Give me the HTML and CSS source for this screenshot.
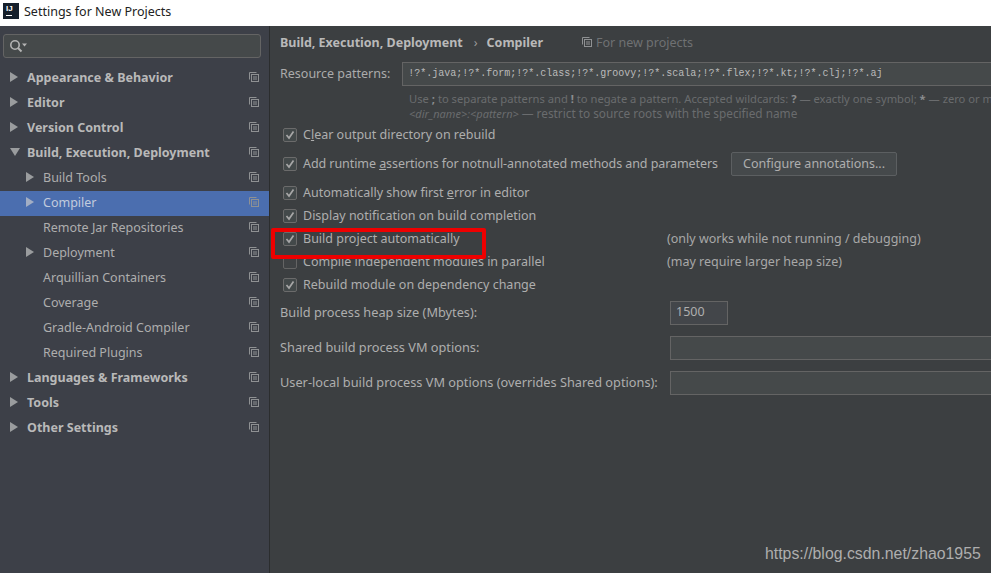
FILE: index.html
```html
<!DOCTYPE html>
<html lang="en">
<head>
<meta charset="utf-8">
<title>Settings for New Projects</title>
<link rel="stylesheet" href="styles.css">
</head>
<body>
<svg class="defs" width="0" height="0" aria-hidden="true">
  <symbol id="copy" viewBox="0 0 10 10">
    <path d="M.5 7.5V.5h7" fill="none" stroke="currentColor"/>
    <rect x="2.5" y="2.5" width="7" height="7" fill="none" stroke="currentColor"/>
    <path d="M4 5h4M4 7h4" stroke="currentColor"/>
  </symbol>
  <symbol id="check" viewBox="0 0 14 14">
    <rect x=".5" y=".5" width="13" height="13" rx="1.5" fill="#43494a" stroke="#6b6b6b"/>
    <path d="M3.5 7l2.5 3 4.5-6.5" fill="none" stroke="#a7a7a7" stroke-width="1.7"/>
  </symbol>
</svg>
<div class="window">
  <header class="titlebar">
    <span class="app-icon"><span class="app-icon-text">IJ</span><span class="app-icon-bar"></span></span>
    <span class="title">Settings for New Projects</span>
  </header>
  <div class="body">
    <nav class="sidebar">
      <div class="search">
        <svg class="search-icon" width="20" height="14" viewBox="0 0 20 14">
          <circle cx="6" cy="6" r="4.2" fill="none" stroke="#b4b4b4" stroke-width="1.6"/>
          <path d="M9 9l3.5 3.5" stroke="#b4b4b4" stroke-width="2"/>
          <path d="M13 4.5h5l-2.5 3z" fill="#b4b4b4"/>
        </svg>
      </div>
      <ul class="tree">
        <li class="row top"><span class="arrow right"></span><span class="label">Appearance &amp; Behavior</span><svg class="copy"><use href="#copy"/></svg></li>
        <li class="row top"><span class="arrow right"></span><span class="label">Editor</span><svg class="copy"><use href="#copy"/></svg></li>
        <li class="row top"><span class="arrow right"></span><span class="label">Version Control</span><svg class="copy"><use href="#copy"/></svg></li>
        <li class="row top"><span class="arrow down"></span><span class="label">Build, Execution, Deployment</span><svg class="copy"><use href="#copy"/></svg></li>
        <li class="row sub"><span class="arrow right"></span><span class="label">Build Tools</span><svg class="copy"><use href="#copy"/></svg></li>
        <li class="row sub selected"><span class="arrow right"></span><span class="label">Compiler</span><svg class="copy"><use href="#copy"/></svg></li>
        <li class="row sub"><span class="arrow none"></span><span class="label">Remote Jar Repositories</span><svg class="copy"><use href="#copy"/></svg></li>
        <li class="row sub"><span class="arrow right"></span><span class="label">Deployment</span><svg class="copy"><use href="#copy"/></svg></li>
        <li class="row sub"><span class="arrow none"></span><span class="label">Arquillian Containers</span><svg class="copy"><use href="#copy"/></svg></li>
        <li class="row sub"><span class="arrow none"></span><span class="label">Coverage</span><svg class="copy"><use href="#copy"/></svg></li>
        <li class="row sub"><span class="arrow none"></span><span class="label">Gradle-Android Compiler</span><svg class="copy"><use href="#copy"/></svg></li>
        <li class="row sub"><span class="arrow none"></span><span class="label">Required Plugins</span><svg class="copy"><use href="#copy"/></svg></li>
        <li class="row top"><span class="arrow right"></span><span class="label">Languages &amp; Frameworks</span><svg class="copy"><use href="#copy"/></svg></li>
        <li class="row top"><span class="arrow right"></span><span class="label">Tools</span><svg class="copy"><use href="#copy"/></svg></li>
        <li class="row top"><span class="arrow right"></span><span class="label">Other Settings</span><svg class="copy"><use href="#copy"/></svg></li>
      </ul>
    </nav>
    <main class="content">
      <div class="crumbs">
        <span class="crumb">Build, Execution, Deployment</span>
        <span class="sep">›</span>
        <span class="crumb">Compiler</span>
        <span class="scope"><svg class="copy"><use href="#copy"/></svg>For new projects</span>
      </div>
      <div class="patterns">
        <span class="field-label">Resource patterns:</span>
        <div class="input mono">!?*.java;!?*.form;!?*.class;!?*.groovy;!?*.scala;!?*.flex;!?*.kt;!?*.clj;!?*.aj</div>
      </div>
      <p class="hint">Use <b>;</b> to separate patterns and <b>!</b> to negate a pattern. Accepted wildcards: <b>?</b> — exactly one symbol; <b>*</b> — zero or more;<br><i>&lt;dir_name&gt;:&lt;pattern&gt;</i> <span class="hint-wide">— restrict to source roots with the specified name</span></p>
      <div class="check first"><svg class="box"><use href="#check"/></svg><span>C<u>l</u>ear output directory on rebuild</span></div>
      <div class="check second">
        <svg class="box"><use href="#check"/></svg><span class="tight">Add runtime <u>a</u>ssertions for notnull-annotated methods and parameters</span>
        <button class="btn">Configure annotations...</button>
      </div>
      <div class="check"><svg class="box"><use href="#check"/></svg><span>Automatically show first <u>e</u>rror in editor</span></div>
      <div class="check"><svg class="box"><use href="#check"/></svg><span>Display notification on build completion</span></div>
      <div class="check"><svg class="box"><use href="#check"/></svg><span class="check-text">Build project automatically</span><span class="note">(only works while not running / debugging)</span></div>
      <div class="check"><span class="box empty"></span><span class="check-text">Compile independent modules in parallel</span><span class="note">(may require larger heap size)</span></div>
      <div class="check"><svg class="box"><use href="#check"/></svg><span>Rebuild module on dependency change</span></div>
      <div class="form-row heap"><span class="form-label">Build process heap size (Mbytes):</span><div class="input short">1500</div></div>
      <div class="form-row"><span class="form-label">Shared build process VM options:</span><div class="input wide"></div></div>
      <div class="form-row"><span class="form-label">User-local build process VM options (overrides Shared options):</span><div class="input wide"></div></div>
      <div class="highlight"></div>
    </main>
  </div>
  <div class="watermark">https://blog.csdn.net/zhao1955</div>
</div>
</body>
</html>
```
FILE: styles.css
```css
* { box-sizing: border-box; }
html, body { margin: 0; height: 100%; overflow: hidden; }
body { font-family: "Noto Sans", "Open Sans", sans-serif; font-size: 12.5px; color: #b4b4b4; background: #3c3f41; }
.defs { position: absolute; }
.window { position: relative; width: 991px; height: 573px; display: flex; flex-direction: column; overflow: hidden; }

.titlebar { height: 26px; background: #fff; display: flex; align-items: center; padding-left: 3px; flex: none; }
.app-icon { width: 16px; height: 16px; background: #16202c; display: flex; flex-direction: column; padding: 1px 0 0 3px; margin-right: 5px; margin-top: -4px; }
.app-icon-text { font: bold 8px/9px "Liberation Sans", sans-serif; color: #fff; }
.app-icon-bar { width: 6px; height: 1px; background: #fff; margin-top: 2px; }
.title { color: #222; font-size: 12.5px; margin-top: -4px; }

.body { flex: 1; display: flex; min-height: 0; }
.sidebar { width: 270px; flex: none; background: #3d4048; border-right: 1px solid #2b2d2e; }
.search { height: 24px; margin: 8px 8px 8px 3px; background: #45494a; border: 1px solid #646464; border-radius: 3px; padding: 4px 0 0 5px; display: flex; }
.search-icon { display: block; }
.tree { list-style: none; margin: 0; padding: 0; }
.row { height: 25px; display: flex; align-items: center; padding: 0 10px 3px 0; }
.row .label { flex: 1; white-space: nowrap; }
.row.top { padding-left: 10px; }
.row.top .label { font-weight: 700; color: #b9b9b9; margin-left: 9px; }
.row.sub { padding-left: 26px; }
.row.sub .label { margin-left: 9px; color: #aeaeae; }
.row.selected { background: #4b6eaf; }
.row.selected .label { color: #c2cbdd; }
.arrow { width: 8px; height: 10px; flex: none; }
.arrow.right { border-style: solid; border-width: 5px 0 5px 8px; border-color: transparent transparent transparent #9a9c9e; }
.arrow.down { border-style: solid; border-width: 8px 5px 0 5px; border-color: #9a9c9e transparent transparent transparent; width: 10px; height: 8px; margin-right: -2px; }
.row.selected .arrow.right { border-left-color: #a3aec4; }
.copy { width: 10px; height: 10px; color: #8f9193; flex: none; }

.content { position: relative; flex: 1; min-width: 0; padding: 0 0 0 10px; background: #3c3f41; white-space: nowrap; overflow: hidden; }
.crumbs { height: 36px; display: flex; align-items: center; padding-bottom: 4px; }
.crumb { font-weight: 700; color: #b9b9b9; }
.sep { margin: 0 9px 0 11px; color: #9a9a9a; }
.scope { margin-left: 39px; color: #6f7173; display: flex; align-items: center; gap: 4px; }
.patterns { display: flex; align-items: center; gap: 12px; }
.field-label { color: #ababab; padding-bottom: 2px; }
.input { height: 24px; background: #45494a; border: 1px solid #646464; }
.mono { font: 10px/22px "Liberation Mono", monospace; color: #bbb; padding-left: 5px; width: 620px; flex: none; }
.hint { margin: 5px 0 0 129px; font-size: 11.2px; line-height: 15px; color: #6a6c6e; height: 30px; }
.hint b { color: #8b8d8f; }
.hint i { font-style: italic; font-size: 11px; }
.hint-wide { font-size: 11.8px; }
.check { height: 23px; display: flex; align-items: center; color: #aeaeae; padding-left: 3px; }
.check.first { margin-top: 2px; }
.check.second { height: 35px; }
.tight { letter-spacing: -0.07px; }
.box { width: 14px; height: 14px; margin-right: 6px; flex: none; }
.box.empty { border: 1px solid #646464; border-radius: 2px; background: #3f4244; }
.check-text { width: 364px; flex: none; }
.note { color: #a8a8a8; }
.btn { margin-left: 13px; height: 24px; width: 166px; padding: 0; font: inherit; color: #aeaeae; background: #45494b; border: 1px solid #5c5f61; border-radius: 2px; }
.form-row { height: 24px; margin-top: 11px; display: flex; align-items: center; color: #aeaeae; }
.form-row.heap { margin-top: 5px; }
.form-label { width: 390px; flex: none; padding-bottom: 2px; font-size: 12.75px; }
.input.short { width: 58px; padding-left: 5px; line-height: 20px; background: #43464a; }
.input.wide { width: 340px; flex: none; }

.highlight { position: absolute; left: 1px; top: 202px; width: 215px; height: 31px; border: 4px solid #ee0000; border-radius: 2px; }
.watermark { position: absolute; left: 765px; top: 544px; font: 15.85px/20px "Liberation Sans", sans-serif; color: #aeaeae; }
```
